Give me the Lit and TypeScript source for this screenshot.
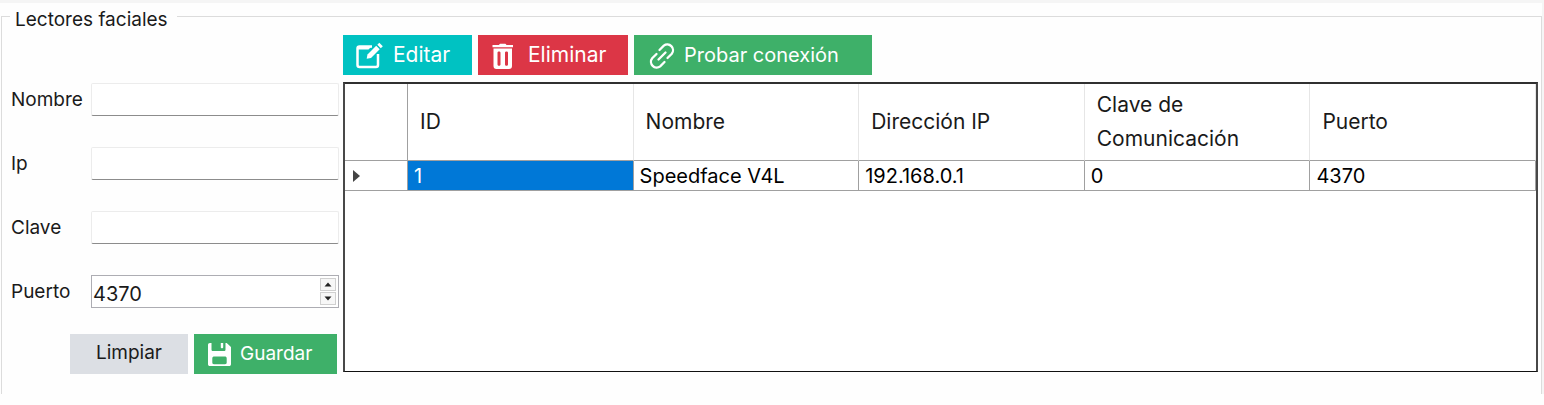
import { LitElement, html, css } from "lit";
import { customElement, state } from "lit/decorators.js";

interface Reader {
  id: number;
  name: string;
  ip: string;
  key: string;
  port: number;
}

@customElement("app-root")
export class AppRoot extends LitElement {
  static styles = css`
    :host {
      display: block;
      box-sizing: border-box;
      min-height: 100vh;
      border-top: 3px solid #f5f5f5;
      background: #fefefe;
      color: #1a1a1a;
      font-family: Inter, "Open Sans", sans-serif;
      font-size: 19px;
      line-height: 20px;
    }
    * {
      box-sizing: border-box;
    }
    .page {
      border-right: 2px solid #f5f5f5;
    }
    .group {
      display: block;
      min-width: 0;
      margin: 0 0 0 1px;
      padding: 5px 3px 20px 9px;
      border: 1px solid #dcdcdc;
      border-bottom: 0;
    }
    .legend {
      margin-left: -1px;
      padding: 7px 9px 0 5px;
    }
    .layout {
      display: grid;
      grid-template-columns: 328px minmax(0, 1fr);
      gap: 4px;
    }
    .form {
      padding-top: 48px;
    }
    .fields {
      display: grid;
      gap: 31px;
    }
    .field {
      display: grid;
      grid-template-columns: 80px minmax(0, 1fr);
      align-items: center;
      height: 33px;
    }
    .input {
      width: 100%;
      height: 33px;
      padding: 0 2px;
      border: 1px solid #ececec;
      border-bottom: 1px solid #8c8c8c;
      border-radius: 2px;
      background: #fff;
      color: inherit;
      font: inherit;
      font-size: 20px;
      outline: none;
      appearance: textfield;
    }
    .input::-webkit-inner-spin-button {
      appearance: none;
      margin: 0;
    }
    .spinner {
      display: flex;
      height: 33px;
      border: 1px solid #adadb3;
      background: #fff;
    }
    .spinner .input {
      flex: 1;
      min-width: 0;
      height: 31px;
      padding: 4px 1px 0;
      border: 0;
    }
    .steps {
      display: grid;
      grid-template-rows: 13px 13px;
      gap: 1px;
      padding: 2px;
    }
    .step {
      display: grid;
      place-items: center;
      width: 16px;
      padding: 0;
      border: 1px solid #d0d0d0;
      background: #f7f7f7;
    }
    .actions {
      display: flex;
      justify-content: flex-end;
      gap: 6px;
      padding: 26px 2px 0 0;
    }
    .toolbar {
      display: flex;
      gap: 6px;
      margin-bottom: 7px;
      font-size: 21px;
    }
    .button {
      display: flex;
      align-items: center;
      height: 40px;
      padding: 0 12px;
      border: 0;
      color: #fff;
      font: inherit;
      white-space: nowrap;
      cursor: pointer;
    }
    .icon {
      display: block;
      flex: none;
      width: 28px;
      height: 28px;
      margin-right: 10px;
    }
    .edit {
      width: 129px;
      background: #00c2c2;
    }
    .delete {
      width: 150px;
      background: #dc3646;
    }
    .test {
      width: 238px;
      background: #3eb069;
      font-size: 20px;
    }
    .test .icon {
      margin: 0 8px 0 2px;
    }
    .save {
      width: 143px;
      background: #3eb069;
    }
    .save .icon {
      margin-right: 6px;
    }
    .clear {
      width: 118px;
      justify-content: center;
      padding: 0 0 3px;
      background: #dcdfe4;
      color: #1a1a1a;
    }
    .grid {
      min-height: 290px;
      border: 2px solid #484848;
      border-top-color: #303030;
      border-bottom: 1px solid #111;
      background: #fff;
    }
    .table {
      width: 100%;
      border-collapse: separate;
      border-spacing: 0;
      table-layout: fixed;
      font-size: 20px;
    }
    .marker {
      width: 63px;
    }
    .head {
      height: 77px;
      padding: 0 12px;
      border-right: 1px solid #e6e6e6;
      border-bottom: 1px solid #a0a0a0;
      font-size: 21px;
      font-weight: 400;
      line-height: 34px;
      text-align: left;
    }
    .head.marker {
      border-right-color: #a0a0a0;
    }
    .cell {
      height: 30px;
      padding: 0 6px;
      border-right: 1px solid #a0a0a0;
      border-bottom: 1px solid #a0a0a0;
      color: #000;
      line-height: 28px;
    }
    .cell.selected {
      background: #0078d7;
      color: #fff;
    }
    .arrow {
      display: block;
      margin-left: 2px;
    }
  `;

  @state() private port = 4370;

  private columns = ["ID", "Nombre", "Dirección IP", "Clave de Comunicación", "Puerto"];

  private readers: Reader[] = [
    { id: 1, name: "Speedface V4L", ip: "192.168.0.1", key: "0", port: 4370 },
  ];

  private textField(id: string, label: string) {
    return html`<div class="field">
      <label for=${id}>${label}</label>
      <input class="input" id=${id} type="text" />
    </div>`;
  }

  render() {
    return html`<main class="page">
      <fieldset class="group">
        <legend class="legend">Lectores faciales</legend>
        <div class="layout">
          <form class="form" @submit=${(e: Event) => e.preventDefault()}>
            <div class="fields">
              ${this.textField("nombre", "Nombre")} ${this.textField("ip", "Ip")}
              ${this.textField("clave", "Clave")}
              <div class="field">
                <label for="puerto">Puerto</label>
                <div class="spinner">
                  <input
                    class="input"
                    id="puerto"
                    type="number"
                    .value=${String(this.port)}
                    @change=${(e: Event) => (this.port = Number((e.target as HTMLInputElement).value))}
                  />
                  <div class="steps">
                    <button class="step" type="button" aria-label="Aumentar" @click=${() => this.port++}>
                      <svg width="8" height="5" viewBox="0 0 8 5"><path d="M4 .5 7.500 4.500h-7z" fill="#222" /></svg>
                    </button>
                    <button class="step" type="button" aria-label="Disminuir" @click=${() => this.port--}>
                      <svg width="8" height="5" viewBox="0 0 8 5"><path d="M4 4.500.5.5h7z" fill="#222" /></svg>
                    </button>
                  </div>
                </div>
              </div>
            </div>
            <div class="actions">
              <button class="button clear" type="reset">Limpiar</button>
              <button class="button save" type="submit">
                <svg class="icon" viewBox="0 0 28 28" fill="#fff">
                  <path
                    fill-rule="evenodd"
                    d="M4 3h1.500v6.500c0 1 .5 1.500 1.500 1.500h11c1 0 1.500-.5 1.500-1.500V3h1.200L25 7v17c0 1.500-.7 2-2 2H4c-1.300 0-2-.6-2-2V5c0-1.300.7-2 2-2zm4.500 13.500C7 16.500 6.300 17 6.300 18.500v4c0 1.200.5 1.700 1.700 1.700h11c1.200 0 1.700-.5 1.700-1.700v-4c0-1.500-.7-2-2-2z"
                  />
                  <path d="M14.800 3h2.400v4.500c0 1-2.400 1-2.400 0z" />
                </svg>
                Guardar
              </button>
            </div>
          </form>
          <section>
            <div class="toolbar">
              <button class="button edit" type="button">
                <svg class="icon" viewBox="0 0 28 28" fill="none">
                  <path
                    d="M17 5.500H4.500c-1.200 0-2 .8-2 2V24c0 1.200.8 2 2 2H21c1.200 0 2-.8 2-2V13"
                    stroke="#fff"
                    stroke-width="2.500"
                  />
                  <path d="M2 5h15l-3.500 3.500H2z" fill="#fff" />
                  <path d="M12.500 13.500 21.200 4.800l3.500 3.500L16 17l-4.300.8z" fill="#fff" />
                  <path d="m22.300 3.700 2-2 3.500 3.500-2 2z" fill="#fff" />
                </svg>
                Editar
              </button>
              <button class="button delete" type="button">
                <svg class="icon" viewBox="0 0 28 28" fill="#fff">
                  <path d="M2.500 4H9c.4-1 .9-1.300 2-1.300h3.500c1 0 1.600.4 2 1.300H23v2.200H2.500z" />
                  <path
                    fill-rule="evenodd"
                    d="M3.500 7.500h18.500V25c0 2-1 3-3 3H6.500c-2 0-3-1-3-3zm4 4v12c0 1.700 3 1.700 3 0v-12c0-1.500-3-1.500-3 0zm7.500 0v12c0 1.700 3 1.700 3 0v-12c0-1.500-3-1.500-3 0z"
                  />
                </svg>
                Eliminar
              </button>
              <button class="button test" type="button">
                <svg
                  class="icon"
                  viewBox="0 0 28 28"
                  fill="none"
                  stroke="#fff"
                  stroke-width="2.300"
                  stroke-linecap="round"
                >
                  <path d="m10.500 18.500 7-7" />
                  <path d="m11.500 9 4.300-4.300a5.700 5.700 0 0 1 8 8L19.500 17" />
                  <path d="m16.500 21-4.300 4.300a5.700 5.700 0 0 1-8-8L8.500 13" />
                </svg>
                Probar conexión
              </button>
            </div>
            <div class="grid">
              <table class="table">
                <thead>
                  <tr>
                    <th class="head marker" aria-label="Fila actual"></th>
                    ${this.columns.map((name) => html`<th class="head" scope="col">${name}</th>`)}
                  </tr>
                </thead>
                <tbody>
                  ${this.readers.map(
                    (r) => html`<tr>
                      <td class="cell">
                        <svg class="arrow" width="7" height="12" viewBox="0 0 7 12">
                          <path d="M0 0v12l7-6z" fill="#444" />
                        </svg>
                      </td>
                      <td class="cell selected">${r.id}</td>
                      <td class="cell">${r.name}</td>
                      <td class="cell">${r.ip}</td>
                      <td class="cell">${r.key}</td>
                      <td class="cell">${r.port}</td>
                    </tr>`,
                  )}
                </tbody>
              </table>
            </div>
          </section>
        </div>
      </fieldset>
    </main>`;
  }
}
